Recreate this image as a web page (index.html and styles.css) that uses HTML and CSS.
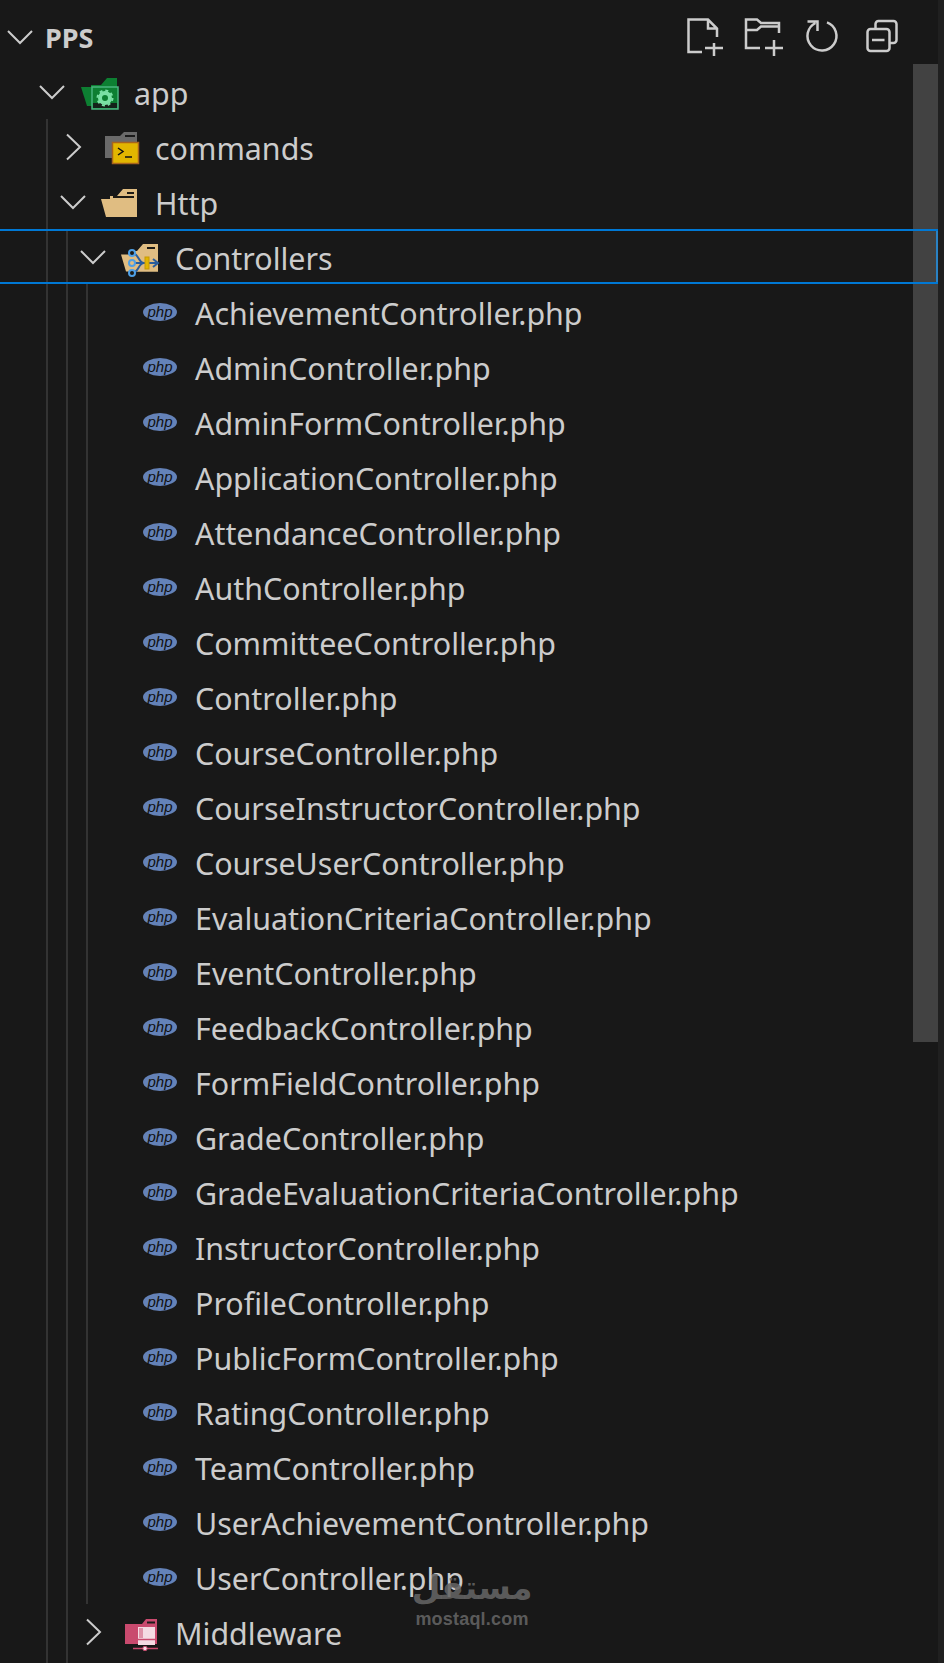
FILE: index.html
```html
<!DOCTYPE html>
<html lang="en">
<head>
  <meta charset="UTF-8" />
  <meta name="viewport" content="width=device-width, initial-scale=1.0"/>
  <title>PPS Explorer</title>
  <link rel="stylesheet" href="styles.css">
</head>
<body>
  <svg class="defs" width="0" height="0">
    <symbol id="chev-down" viewBox="0 0 30 20">
      <path d="M3 4l12 12L27 4" fill="none" stroke="#ccc" stroke-width="2"/>
    </symbol>
    <symbol id="chev-right" viewBox="0 0 30 30">
      <path d="M9 2.500l13 12.500L9 27.500" fill="none" stroke="#ccc" stroke-width="2"/>
    </symbol>
  </svg>

  <div class="explorer">
    <div class="tree">
      <div class="header">
        <svg class="twistie-head" width="30" height="20"><use href="#chev-down"/></svg>
        <span class="title">PPS</span>
        <div class="actions">
          <svg class="action" viewBox="0 0 40 40">
            <path d="M16 35H2.500V2.500H22L31 11.500V20M22 2.500V11.500H31M19 31H37M28 26V39"/>
          </svg>
          <svg class="action" viewBox="0 0 40 40">
            <path d="M16 31H2V2.500H13L17 6H35V16M2 13H13L17 9.500H35M21 31H39M30 23V39"/>
          </svg>
          <svg class="action" viewBox="0 0 40 40">
            <path d="M25 5.400A14.500 14.500 0 1 1 13.500 6M5.500 4.500H15.500V14"/>
          </svg>
          <svg class="action" viewBox="0 0 40 40">
            <rect x="7.500" y="12" width="22" height="22" rx="3"/>
            <path d="M15.500 12V7a3 3 0 0 1 3-3H33.500a3 3 0 0 1 3 3V23a3 3 0 0 1-3 3H29.500M12 23H24.500"/>
          </svg>
        </div>
      </div>

      <div class="row lvl-1">
        <svg class="twistie" viewBox="0 0 30 20"><use href="#chev-down"/></svg>
        <svg class="icon" viewBox="0 0 40 40">
          <path d="M12 13H22L28 6H38V32H12z" fill="#0d7f32"/>
          <path d="M2 15H26L30 34H8z" fill="#0d7f32"/>
          <rect x="13" y="15" width="26" height="22" fill="#0d7f32" stroke="#4ab57f" stroke-width="1.500"/>
          <rect x="14" y="31" width="24" height="5" fill="#14231a"/>
          <circle cx="26" cy="26" r="5" fill="none" stroke="#7ae0a4" stroke-width="4"/>
          <circle cx="26" cy="26" r="7.500" fill="none" stroke="#7ae0a4" stroke-width="2" stroke-dasharray="3 2.900"/>
        </svg>
        <span class="label">app</span>
      </div>

      <div class="row lvl-2">
        <svg class="twistie" viewBox="0 0 30 30"><use href="#chev-right"/></svg>
        <svg class="icon" viewBox="0 0 40 40">
          <path d="M5 9H20L24 5H37V31H5z" fill="#6a6a6a"/>
          <path d="M25 8H35V10H25z" fill="#1a1a1a"/>
          <rect x="12.500" y="15.500" width="26" height="21" fill="#e2b600" stroke="#a8641c" stroke-width="1.500"/>
          <path d="M18 21l5 3.500-5 3.500M25 30H32" fill="none" stroke="#111" stroke-width="1.500"/>
        </svg>
        <span class="label">commands</span>
      </div>

      <div class="row lvl-2">
        <svg class="twistie" viewBox="0 0 30 20"><use href="#chev-down"/></svg>
        <svg class="icon" viewBox="0 0 40 40">
          <path d="M10 14H17L23 7H37V35H10z" fill="#e0bd82"/>
          <path d="M13 14H34V16H13zM27 10H34V12H27z" fill="#1d1a14"/>
          <path d="M1 17H26L30 20H37V35H6z" fill="#e0bd82"/>
        </svg>
        <span class="label">Http</span>
      </div>

      <div class="row lvl-3 selected">
        <svg class="twistie" viewBox="0 0 30 20"><use href="#chev-down"/></svg>
        <svg class="icon" viewBox="0 0 40 40">
          <path d="M10 14H17L23 7H38V34.500H10z" fill="#e0bd82"/>
          <path d="M27 10H35V12H27z" fill="#1d1a14"/>
          <path d="M1 17.500H26L30 20H38V34.500H6z" fill="#e0bd82"/>
          <path d="M12 16C19 16 18 26 24 26M12 26H37M12 36C19 36 18 26 24 26M33 22l5 4-5 4" fill="none" stroke="#2a5d9c" stroke-width="2"/>
          <rect x="25" y="20" width="4" height="12" fill="#e2b600" stroke="#c79a00"/>
          <circle cx="12" cy="16" r="3" fill="#1d1a14" stroke="#4ea0e6" stroke-width="2"/>
          <circle cx="12" cy="26" r="3" fill="#e0bd82" stroke="#4ea0e6" stroke-width="2"/>
          <circle cx="12" cy="36" r="3" fill="#1d1a14" stroke="#4ea0e6" stroke-width="2"/>
        </svg>
        <span class="label">Controllers</span>
      </div>

      <div class="row lvl-4"><span class="php">php</span><span class="label">AchievementController.php</span></div>
      <div class="row lvl-4"><span class="php">php</span><span class="label">AdminController.php</span></div>
      <div class="row lvl-4"><span class="php">php</span><span class="label">AdminFormController.php</span></div>
      <div class="row lvl-4"><span class="php">php</span><span class="label">ApplicationController.php</span></div>
      <div class="row lvl-4"><span class="php">php</span><span class="label">AttendanceController.php</span></div>
      <div class="row lvl-4"><span class="php">php</span><span class="label">AuthController.php</span></div>
      <div class="row lvl-4"><span class="php">php</span><span class="label">CommitteeController.php</span></div>
      <div class="row lvl-4"><span class="php">php</span><span class="label">Controller.php</span></div>
      <div class="row lvl-4"><span class="php">php</span><span class="label">CourseController.php</span></div>
      <div class="row lvl-4"><span class="php">php</span><span class="label">CourseInstructorController.php</span></div>
      <div class="row lvl-4"><span class="php">php</span><span class="label">CourseUserController.php</span></div>
      <div class="row lvl-4"><span class="php">php</span><span class="label">EvaluationCriteriaController.php</span></div>
      <div class="row lvl-4"><span class="php">php</span><span class="label">EventController.php</span></div>
      <div class="row lvl-4"><span class="php">php</span><span class="label">FeedbackController.php</span></div>
      <div class="row lvl-4"><span class="php">php</span><span class="label">FormFieldController.php</span></div>
      <div class="row lvl-4"><span class="php">php</span><span class="label">GradeController.php</span></div>
      <div class="row lvl-4"><span class="php">php</span><span class="label">GradeEvaluationCriteriaController.php</span></div>
      <div class="row lvl-4"><span class="php">php</span><span class="label">InstructorController.php</span></div>
      <div class="row lvl-4"><span class="php">php</span><span class="label">ProfileController.php</span></div>
      <div class="row lvl-4"><span class="php">php</span><span class="label">PublicFormController.php</span></div>
      <div class="row lvl-4"><span class="php">php</span><span class="label">RatingController.php</span></div>
      <div class="row lvl-4"><span class="php">php</span><span class="label">TeamController.php</span></div>
      <div class="row lvl-4"><span class="php">php</span><span class="label">UserAchievementController.php</span></div>
      <div class="row lvl-4"><span class="php">php</span><span class="label">UserController.php</span></div>

      <div class="row lvl-3">
        <svg class="twistie" viewBox="0 0 30 30"><use href="#chev-right"/></svg>
        <svg class="icon" viewBox="0 0 40 40">
          <path d="M5 12H22L26 7H37V32H5z" fill="#c94a6e"/>
          <path d="M27 9.500H35V11.500H27z" fill="#1a1a1a"/>
          <rect x="18" y="15" width="17" height="18" fill="#f4dbe3"/>
          <rect x="19" y="16" width="4" height="10" fill="#c94a6e" opacity=".5"/>
          <path d="M18 27.500H35" stroke="#c94a6e" stroke-width="1.500"/>
          <path d="M13 36.500H38" stroke="#c94a6e" stroke-width="1.500"/>
          <circle cx="25" cy="36.500" r="2.200" fill="#f4dbe3" stroke="#c94a6e"/>
        </svg>
        <span class="label">Middleware</span>
      </div>

      <div class="guide guide-1"></div>
      <div class="guide guide-2"></div>
      <div class="guide guide-3"></div>
      <div class="scrollbar"></div>
      <div class="watermark">
        <span class="wm-ar" lang="ar" dir="rtl">مستقل</span>
        <span class="wm-en">mostaql.com</span>
      </div>
    </div>
    <div class="edge"></div>
  </div>
</body>
</html>
```

FILE: styles.css
```css
html, body {
  margin: 0;
  height: 100%;
}

body {
  background: #181818;
  color: #ccc;
  font-family: "Noto Sans", "Open Sans", Arial, sans-serif;
  font-size: 30.400px;
  overflow: hidden;
}

.defs {
  display: block;
  height: 0;
}

.explorer {
  display: flex;
  height: 1663px;
}

.tree {
  position: relative;
  width: 938px;
  overflow: hidden;
}

.edge {
  flex: 1;
  background: #202020;
}

/* header */
.header {
  display: flex;
  align-items: center;
  height: 54px;
  padding-top: 10px;
  padding-left: 5px;
}

.twistie-head {
  flex: none;
}

.title {
  margin-left: 10px;
  font-size: 27px;
  font-weight: 700;
}

.actions {
  display: flex;
  gap: 18px;
  margin-left: auto;
  margin-right: 38px;
}

.action {
  width: 40px;
  height: 40px;
  fill: none;
  stroke: #ccc;
  stroke-width: 2.500;
}

/* rows */
.row {
  display: flex;
  align-items: center;
  height: 55px;
  box-sizing: border-box;
}

.lvl-1 { padding-left: 37px; }
.lvl-2 { padding-left: 58px; }
.lvl-3 { padding-left: 78px; }
.lvl-4 { padding-left: 143px; }

.selected {
  position: relative;
  z-index: 1;
  box-shadow: inset 0 2px #0078d4, inset 0 -2px #0078d4, inset -2px 0 #2a82c4;
}

.twistie {
  flex: none;
  width: 30px;
  height: 30px;
}

.icon {
  flex: none;
  width: 40px;
  height: 40px;
  margin-left: 12px;
}

.php {
  flex: none;
  width: 34px;
  height: 18px;
  border-radius: 50%;
  background: #6482b8;
  color: #111;
  font-family: "Liberation Sans", Arial, sans-serif;
  font-size: 15px;
  font-style: italic;
  line-height: 17px;
  text-align: center;
}

.label {
  margin-left: 15px;
  padding-top: 4px;
  white-space: nowrap;
}

.php + .label {
  margin-left: 18px;
}

/* overlays */
.guide {
  position: absolute;
  left: 46px;
  width: 2px;
  background: #333;
}

.guide-1 { top: 119px; bottom: 0; }
.guide-2 { left: 66px; top: 229px; bottom: 0; }
.guide-3 { left: 86px; top: 284px; height: 1320px; }

.scrollbar {
  position: absolute;
  top: 64px;
  right: 0;
  width: 25px;
  height: 978px;
  background: #424242;
}

.watermark {
  position: absolute;
  left: 414px;
  top: 1571px;
  width: 116px;
  display: flex;
  flex-direction: column;
  align-items: center;
  color: rgba(100, 100, 100, 0.9);
  line-height: 1;
}

.wm-ar {
  font-family: "DejaVu Sans", sans-serif;
  font-size: 33px;
  font-weight: 700;
}

.wm-en {
  margin-top: 6px;
  font-family: "Liberation Sans", Arial, sans-serif;
  font-size: 18px;
  font-weight: 700;
  letter-spacing: 0.200px;
}
```
